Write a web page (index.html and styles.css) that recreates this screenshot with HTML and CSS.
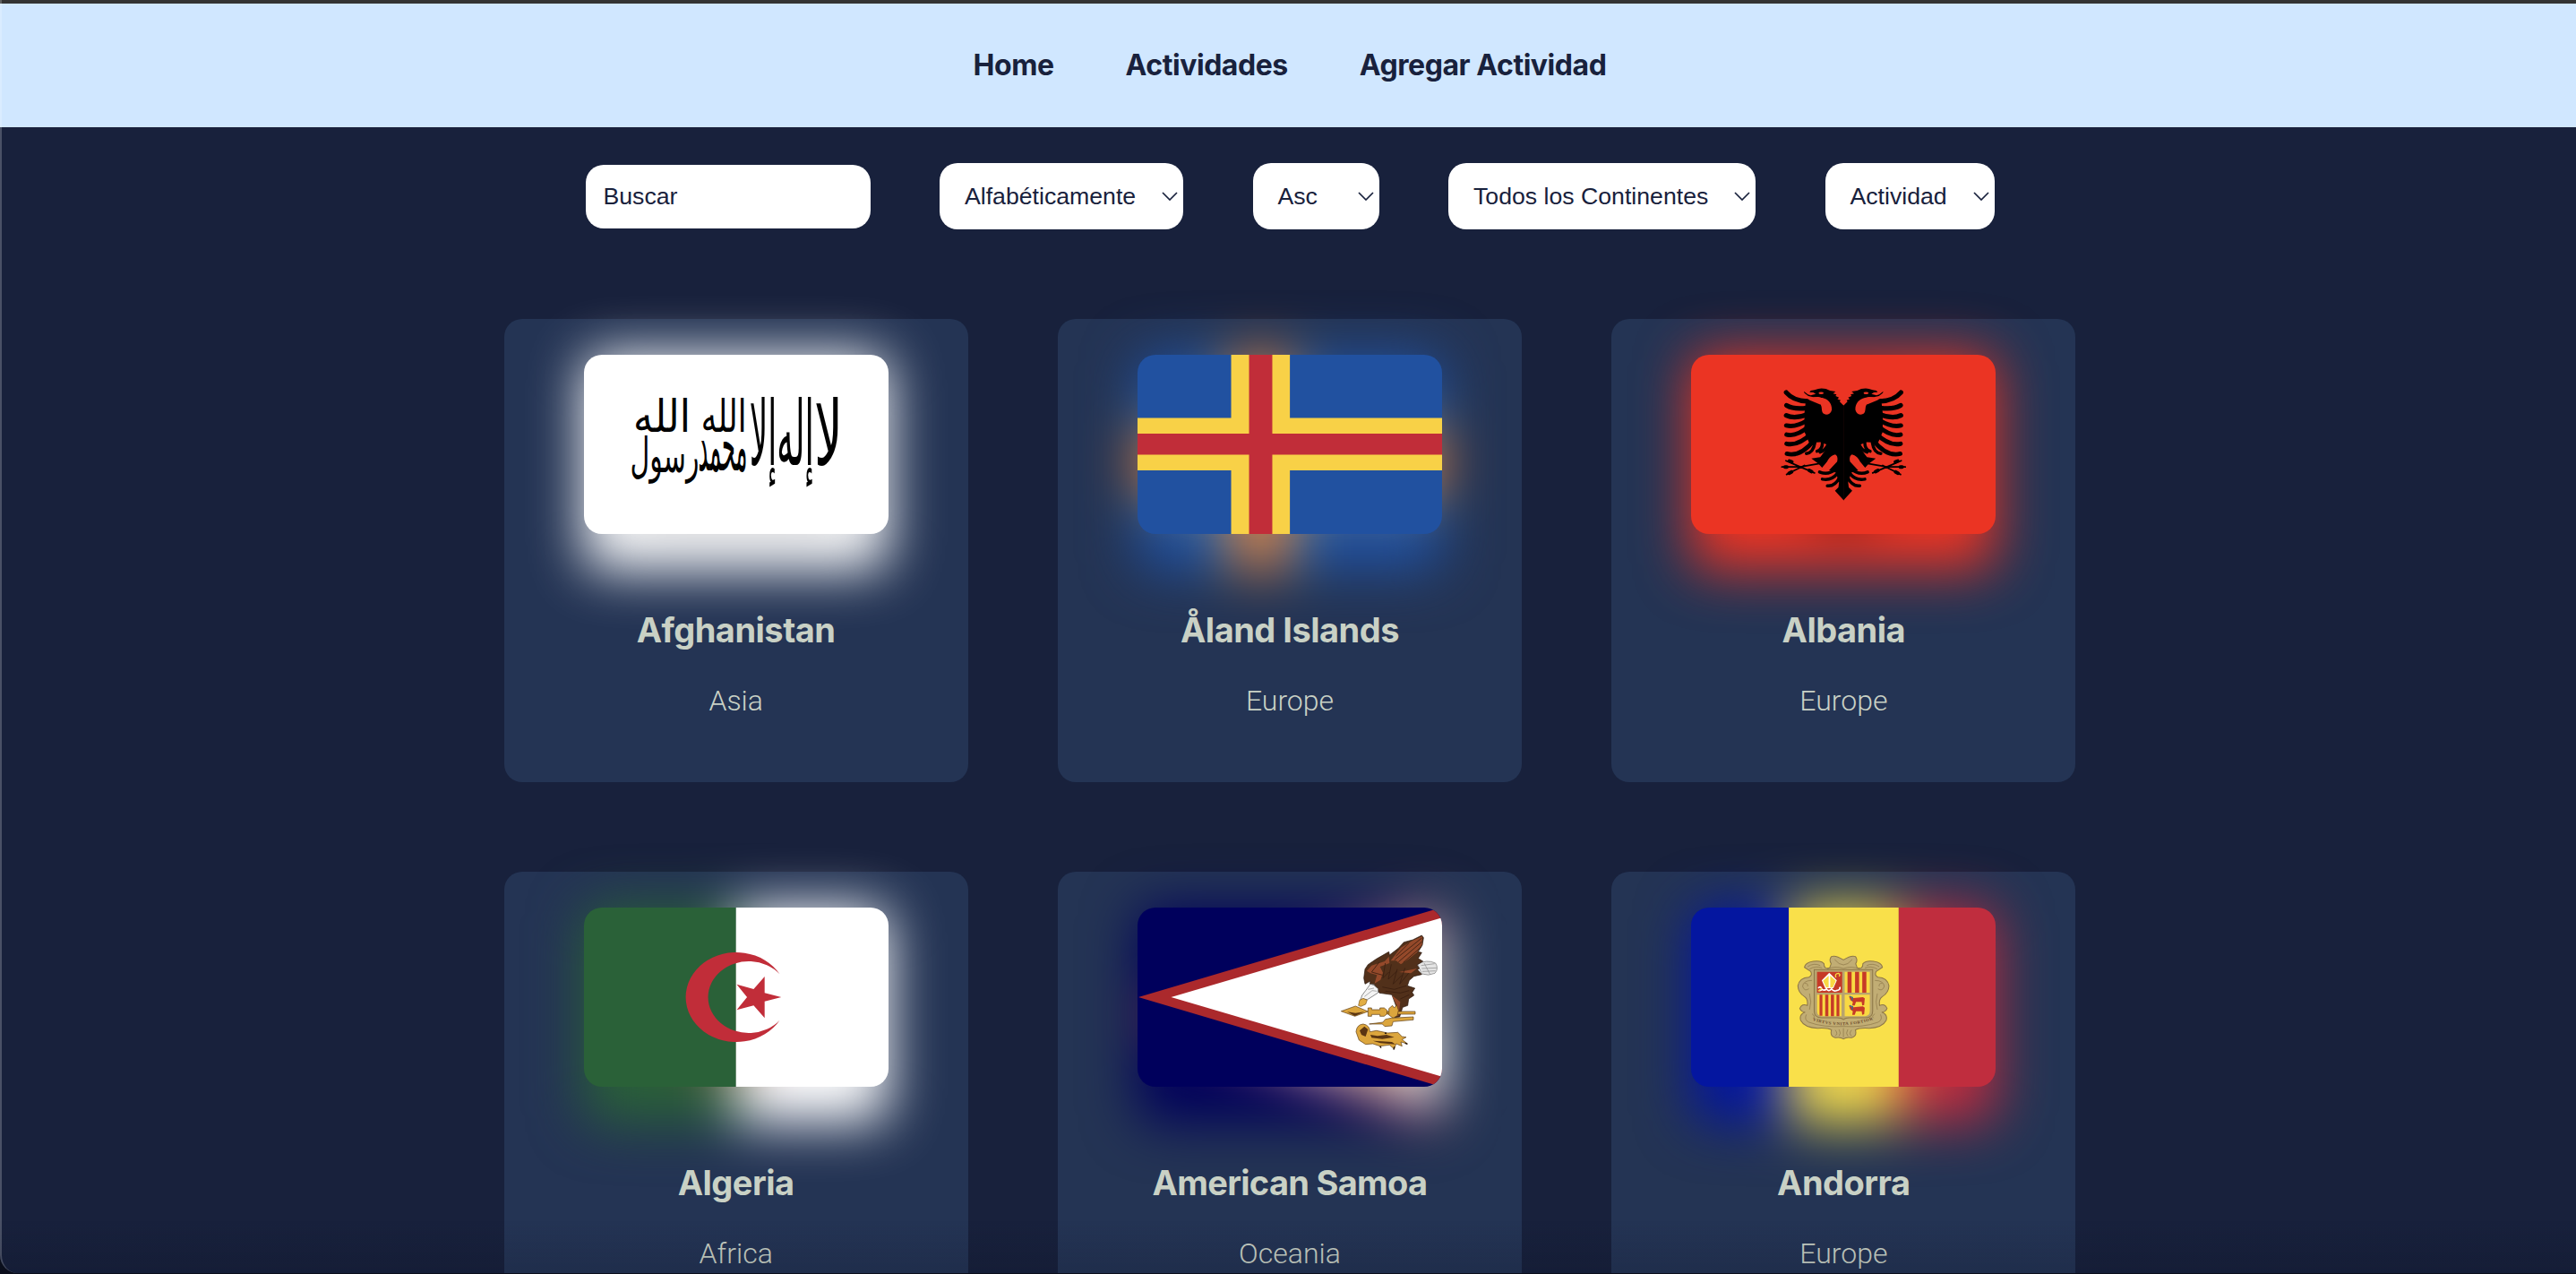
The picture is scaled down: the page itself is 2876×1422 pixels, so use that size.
FILE: index.html
```html
<!DOCTYPE html>
<html lang="es">
<head>
<meta charset="utf-8">
<title>Countries</title>
<link rel="stylesheet" href="styles.css">
</head>
<body>
<nav class="nav">
  <a class="nav-link" href="#">Home</a>
  <a class="nav-link" href="#">Actividades</a>
  <a class="nav-link" href="#">Agregar Actividad</a>
</nav>

<main class="page">
  <div class="filters">
    <input class="search" type="text" placeholder="Buscar">
    <button class="select select-order"><span>Alfabéticamente</span><svg class="chevron" viewBox="0 0 18 10"><path d="M1 1l8 8 8-8"/></svg></button>
    <button class="select select-dir"><span>Asc</span><svg class="chevron" viewBox="0 0 18 10"><path d="M1 1l8 8 8-8"/></svg></button>
    <button class="select select-continent"><span>Todos los Continentes</span><svg class="chevron" viewBox="0 0 18 10"><path d="M1 1l8 8 8-8"/></svg></button>
    <button class="select select-activity"><span>Actividad</span><svg class="chevron" viewBox="0 0 18 10"><path d="M1 1l8 8 8-8"/></svg></button>
  </div>

  <section class="grid">
    <article class="card">
      <div class="flag-box">
        <svg class="glow" viewBox="0 0 340 200" preserveAspectRatio="none"><path fill="#fff" d="M0 0h340v200H0z"/><path fill="#000" opacity=".22" d="M52 50h237v99H52z"/></svg>
        <svg class="flag" viewBox="0 0 340 200">
          <path fill="#fff" d="M0 0h340v200H0z"/>
          <g class="shahada" text-anchor="middle">
            <text transform="translate(273 123) scale(.56 1)">لا</text>
            <text transform="translate(236 123) scale(.37 1)">إله</text>
            <text transform="translate(200 123) scale(.36 1)">إلا</text>
            <text transform="translate(156 86) scale(.35 .5)">الله</text>
            <text transform="translate(155 129) scale(.24 .8)">محمد</text>
            <text transform="translate(90 131) scale(.3 .54)">رسول</text>
            <text transform="translate(87 86) scale(.44 .5)">الله</text>
          </g>
        </svg>
      </div>
      <h2 class="name">Afghanistan</h2>
      <p class="continent">Asia</p>
    </article>

    <article class="card">
      <div class="flag-box">
        <svg class="glow" viewBox="0 0 340 200" preserveAspectRatio="none"><use href="#aland"/></svg>
        <svg class="flag" viewBox="0 0 340 200">
          <g id="aland" transform="scale(.35075) translate(-285 -160)">
            <path fill="#2151a0" d="M285 160h970v571H285z"/>
            <path fill="#f8d147" d="M583 160h187v571H583zM285 361h970v167H285z"/>
            <path fill="#c12d39" d="M640 160h74v571h-74zM285 411h970v67H285z"/>
          </g>
        </svg>
      </div>
      <h2 class="name">Åland Islands</h2>
      <p class="continent">Europe</p>
    </article>

    <article class="card">
      <div class="flag-box">
        <svg class="glow" viewBox="0 0 340 200" preserveAspectRatio="none"><use href="#albania"/></svg>
        <svg class="flag" viewBox="0 0 340 200">
          <g id="albania" transform="scale(.35075) translate(-279 -160)">
            <path fill="#eb3423" d="M279 160h970v571H279z"/>
            <g id="eagle-half">
              <path d="M765 322L752 309 755 305 745 301 750 296 739 291 742 286 731 283 739 277 721 274Q705 265 684 268Q672 272 660 274L656 279 668 280 676 285 660 289 651 286 638 276 640 282 652 291 668 295 684 294 697 298 690 318 645 300 640 345V405L655 440 690 438 712 446 706 464 690 486 662 490 685 507 696 519 712 500Q722 480 738 477Q748 482 744 500L718 528 740 535 750 566 748 582 737 593 765 623z"/>
              <path fill="#eb3423" d="M650 297C668 304 684 308 692 320C697 330 693 340 700 347C709 354 724 349 727 335C728 315 715 301 697 297C680 294 668 297 650 297z"/>
              <ellipse cx="693" cy="282" rx="8" ry="3.5" fill="#eb3423"/>
              <g fill="none" stroke="#000" stroke-linecap="round">
                <path stroke-width="15" d="M582 280Q604 306 648 308M583 321Q606 335 648 329M582 353Q608 366 648 350"/>
                <path stroke-width="14" d="M582 385Q612 392 650 368M583 414Q614 422 654 388M583 443Q620 452 664 408M584 475Q628 486 672 430"/>
                <path stroke-width="10" d="M646 474Q668 472 673 440M680 467Q697 462 697 440M690 470Q706 464 714 448"/>
                <path stroke-width="10" d="M688 533Q716 545 742 522M697 556Q726 562 746 536M713 577Q737 580 752 550"/>
                <path stroke-width="5" d="M568 517H626L688 506M581 497L620 514 672 536M583 541L600 532 640 512"/>
                <path stroke-width="11" d="M578 517h6M592 498l8 3M591 537l8-4M655 528l8 4"/>
              </g>
            </g>
            <use href="#eagle-half" transform="translate(1529 0) scale(-1 1)"/>
          </g>
        </svg>
      </div>
      <h2 class="name">Albania</h2>
      <p class="continent">Europe</p>
    </article>

    <article class="card">
      <div class="flag-box">
        <svg class="glow" viewBox="0 0 340 200" preserveAspectRatio="none"><use href="#algeria"/></svg>
        <svg class="flag" viewBox="0 0 340 200">
          <g id="algeria" transform="scale(.35075 .33333) translate(-291 -158)">
            <path fill="#2a6138" d="M291 158h484v600H291z"/>
            <path fill="#fff" d="M775 158h486v600H775z"/>
            <path fill="#c12d39" d="M914 381A161 150 0 1 0 914 535A129 120 0 1 1 914 381zM919 458L866 444V389L831 431 777 415 810 458 777 501 831 486 866 528V472z"/>
          </g>
        </svg>
      </div>
      <h2 class="name">Algeria</h2>
      <p class="continent">Africa</p>
    </article>

    <article class="card">
      <div class="flag-box">
        <svg class="glow" viewBox="0 0 340 200" preserveAspectRatio="none"><use href="#samoa"/></svg>
        <svg class="flag" viewBox="0 0 340 200">
          <g id="samoa">
            <path fill="#00005c" d="M0 0h340v200H0z"/>
            <path fill="#ab292c" d="M1 100L340 -.3V200.3z"/>
            <path fill="#fff" d="M37.5 100L340 11.2V188.8z"/>
            <g transform="translate(220 22) scale(.33333)" stroke-linejoin="round">
              <path fill="#e4e4e4" stroke="#777" stroke-width="2" d="M278 124Q308 106 338 120Q350 138 336 154Q315 164 292 156z"/>
              <path fill="none" stroke="#888" stroke-width="2" d="M290 128l45-6M292 138l50-2M294 148l44-2M300 120l20 38"/>
              <path fill="#51301a" stroke="#24140a" stroke-width="2" d="M102 140L112 125 140 106 182 82 184 93 214 70 232 50 262 42 292 27 298 35 294 60 280 82 292 85 280 104 296 114 276 126 284 138 278 142 292 158 266 164 250 178 244 196 269 204 260 218 266 228 248 240 245 262 228 268 218 300 202 302 206 264 192 226 150 220 140 205 132 190 118 190 120 180 102 190 98 170z"/>
              <path fill="#94492a" d="M188 112L222 68 262 44 294 30 293 58 276 84 246 108 222 124 206 112zM108 146L124 128 168 114 182 98 184 120 152 132 162 152 154 176 134 188 142 160 120 154zM216 150l60-12-20 16zM192 228l28 22-6 46-10 2 4-36z"/>
              <path fill="none" stroke="#3a1e10" stroke-width="2.500" d="M200 110L292 36M214 116L293 48M230 118L290 66M206 96L250 52M150 116l-26 34 36 10M170 120l-8 50 20-20M190 124l-10 50 30-28M210 140l-14 50 30-30M236 136l-18 54 30-36M160 200l40 8 40-12M170 214l50 6 30-8M220 240l30-14"/>
              <path fill="#f4f4f4" stroke="#555" stroke-width="2" d="M120 190L132 194 146 206 146 219 126 232 110 242 94 240 86 246 92 228 104 212z"/>
              <path fill="none" stroke="#888" stroke-width="2" d="M100 232l26-20 16 2M112 208l20-4"/>
              <path fill="#e2ae44" stroke="#7a5318" stroke-width="2" d="M84 244L96 238 109 244 104 258 88 265 80 262z"/>
              <g fill="#dca63d" stroke="#5a3a12" stroke-width="2">
                <path d="M22 281L70 264 112 282 68 298z"/>
                <path d="M112 270h12v6h28v-6h14l10 8v12l-10 8h-14v-6h-28v6h-12zM176 282h94v9h-94z"/>
                <path d="M182 272l12-10 6 8 8-10 6 18-4 18-14 8-14-10z"/>
                <path d="M116 324L162 318 170 308 190 304 264 300 264 310 196 316 192 330 168 332 160 324z"/>
                <path d="M72 350Q74 326 96 324Q118 328 118 350L140 346 178 354 212 352 226 366 240 368 226 376 244 390 222 384 226 398 206 390 200 408 184 394 152 398 128 390 104 392 82 378z"/>
              </g>
              <path fill="#5a3512" d="M42 283l28 4 30-4-32 14zM84 346l16-14 12 10-8 24-14-6zM120 360l24 4 30-4 26 8-40 6-36-4zM128 380l30 2 34 2 12 8-50-4z"/>
              <path fill="none" stroke="#24140a" stroke-width="4" d="M152 398l4 6M200 400l-2 10M236 388l8 3M168 354l6 2"/>
            </g>
          </g>
        </svg>
      </div>
      <h2 class="name name-wide">American Samoa</h2>
      <p class="continent">Oceania</p>
    </article>

    <article class="card">
      <div class="flag-box">
        <svg class="glow" viewBox="0 0 340 200" preserveAspectRatio="none"><use href="#andorra"/></svg>
        <svg class="flag" viewBox="0 0 340 200">
          <g transform="scale(.35075 .33333) translate(-279 -158)">
            <g id="andorra-bands">
              <path fill="#0416a0" d="M279 158h312v600H279z"/>
              <path fill="#f9e04a" d="M590 158h350v600H590z"/>
              <path fill="#c02d3e" d="M940 158h310v600H940z"/>
            </g>
            <g stroke="#8d7748" stroke-width="3" fill="#c1ad74">
              <path d="M764 333Q738 316 726 322Q717 332 725 346L720 360Q702 366 702 346Q692 334 668 338Q642 342 640 358L660 372Q666 386 654 391Q624 392 619 420Q620 444 640 456Q652 464 649 486Q632 478 625 496Q630 508 642 508Q622 516 628 536Q640 560 682 562Q716 560 726 568Q720 588 738 594Q754 590 764 598Q774 590 790 594Q808 588 802 568Q812 560 846 562Q888 560 900 536Q906 516 886 508Q898 508 903 496Q896 478 879 486Q876 464 888 456Q908 444 909 420Q904 392 874 391Q862 386 868 372L888 358Q886 342 860 338Q836 334 826 346Q826 366 808 360L803 346Q811 332 802 322Q790 316 764 333z"/>
              <path fill="none" stroke-width="2" d="M736 332Q750 350 764 350Q778 350 792 332M650 356Q670 342 690 352M656 364Q676 352 696 360M878 356Q858 342 838 352M872 364Q852 352 832 360M664 402Q636 402 634 422Q640 440 654 430M640 412Q652 410 650 422M864 402Q892 402 894 422Q888 440 874 430M888 412Q876 410 878 422M656 446Q664 474 656 500M872 446Q864 474 872 500M646 516Q638 534 654 542Q700 560 764 556Q828 560 874 542Q890 534 882 516M664 514Q676 522 668 528M864 514Q852 522 860 528M738 568Q748 580 738 588M790 568Q780 580 790 588M764 562v30M750 566Q758 580 750 588M778 566Q770 580 778 588M712 364Q738 352 764 362Q790 352 816 364"/>
              <path fill="#b8a46e" d="M671 366H857V505Q857 526 834 527H784Q770 527 764 533Q758 527 744 527H694Q671 526 671 505z"/>
            </g>
            <path fill="#c63a27" d="M680 373h80v70h-80z"/>
            <path fill="#f9d943" d="M768 373h80v70h-80zM680 450h78v72h-64q-14-2-14-18zM768 450h80v54q0 16-14 18h-66z"/>
            <path fill="#c63a27" d="M777 373h13v70h-13zM801 373h13v70h-13zM824 373h13v70h-13zM688 450h9v70h-9zM706 450h10v72h-10zM724 450h10v72h-10zM742 450h9v72h-9z"/>
            <path fill="#fff" d="M719 376L743 402 732 428 706 428 695 402z"/>
            <path fill="#f9d943" d="M717 386v40h-8l-10-23zM722 386v40h8l10-23z"/>
            <path fill="none" stroke="#fff" stroke-width="5" d="M684 428q6-8 10 0t-8 8M696 432q8 6 14-2q6 12 16 0q6 10 16 6q14-2 10-12"/>
            <path fill="none" stroke="#f9d943" stroke-width="4" d="M740 392q-4-14 8-14q8 4 2 10M684 438l12-10"/>
            <g id="cow">
              <path fill="#c63a27" d="M782 456L796 461 826 458 832 462 830 484 824 486 822 474 804 474 800 486 792 486 794 474 786 468z"/>
              <path fill="none" stroke="#3f6a8a" stroke-width="4" d="M783 455l10 4-2 10"/>
            </g>
            <use href="#cow" y="31"/>
            <path id="motto-line" fill="none" d="M666 536Q764 570 868 530"/>
            <text class="motto"><textPath href="#motto-line" textLength="196">VIRTVS VNITA FORTIOR</textPath></text>
          </g>
        </svg>
        <svg class="defs"><defs><g id="andorra" transform="scale(.35075 .33333) translate(-279 -158)"><use href="#andorra-bands"/><ellipse cx="764" cy="460" rx="130" ry="125" fill="#c1a560"/></g></defs></svg>
      </div>
      <h2 class="name">Andorra</h2>
      <p class="continent">Europe</p>
    </article>
  </section>
</main>
</body>
</html>
```
FILE: styles.css
```css
* { box-sizing: border-box; }

body {
  margin: 0;
  height: 1422px;
  overflow: hidden;
  background: #18213c;
  color: #c9d1c5;
  font-family: Inter, sans-serif;
}

/* rounded window edge */
body::after {
  content: "";
  position: fixed;
  inset: 0 -40px 1px 0;
  border-left: 2px solid rgba(255, 255, 255, .22);
  border-bottom-left-radius: 20px;
  box-shadow: 0 0 0 20px #0c101d;
  pointer-events: none;
}

/* slight shade along the bottom of the window */
body::before {
  content: "";
  position: fixed;
  z-index: 2;
  inset: auto 0 0 0;
  height: 60px;
  background: linear-gradient(rgba(5, 8, 25, 0), rgba(5, 8, 25, .14));
  pointer-events: none;
}

.nav {
  display: flex;
  justify-content: center;
  align-items: center;
  gap: 80px;
  height: 142px;
  padding-left: 4px;
  border-top: 4px solid #4c4c4c;
  border-image: linear-gradient(#333 50%, #666 50%) 4 0 0 0;
  background: #d0e7ff;
}

.nav-link {
  color: #18213c;
  font-size: 32px;
  font-weight: 700;
  line-height: 42px;
  letter-spacing: -.45px;
  text-decoration: none;
}

.page { padding: 40px 0 0 4px; }

.filters {
  display: flex;
  justify-content: center;
  align-items: center;
  gap: 77.500px;
  height: 74px;
}

.search,
.select {
  border: 0;
  border-radius: 20px;
  background: #fff;
  color: #18213c;
  font: 26.670px "Liberation Sans", Arial, sans-serif;
}

.search {
  width: 318px;
  height: 71px;
  padding: 0 20px;
}

.search::placeholder { color: #18213c; opacity: 1; }

.select {
  display: flex;
  justify-content: space-between;
  align-items: center;
  height: 74px;
  padding: 0 6px 0 28px;
  white-space: nowrap;
}

.select-order { width: 272px; }
.select-dir { width: 141px; }
.select-continent { width: 343px; }
.select-activity { width: 189px; }

.chevron {
  flex: none;
  width: 18px;
  height: 10px;
  fill: none;
  stroke: #18213c;
  stroke-width: 1.700;
}

.grid {
  display: grid;
  grid-template-columns: repeat(3, 1fr);
  grid-auto-rows: 517px;
  gap: 100px;
  width: 1755px;
  margin: 100px auto 0;
}

.card {
  isolation: isolate;
  display: flex;
  flex-direction: column;
  align-items: center;
  padding-top: 40px;
  border-radius: 20px;
  background: #243454;
}

.flag-box {
  position: relative;
  width: 340px;
  height: 200px;
}

.flag {
  display: block;
  width: 340px;
  height: 200px;
  border-radius: 20px;
}

.glow {
  position: absolute;
  z-index: -1;
  top: 0;
  left: 0;
  width: 340px;
  height: 240px;
  border-radius: 20px;
  filter: blur(30px);
}

.defs { position: absolute; width: 0; height: 0; }

.shahada {
  font: 400 100px "DejaVu Sans", sans-serif;
  direction: rtl;
}

.motto {
  fill: #6b4a2a;
  font: 700 14px "Liberation Serif", serif;
}

.name {
  margin: 82.500px 0 0;
  font-size: 38px;
  font-weight: 700;
  line-height: 48px;
  letter-spacing: -.5px;
}

.name-wide { letter-spacing: -.7px; }

.continent {
  margin: 36.500px 0 0;
  font-family: Roboto, sans-serif;
  font-size: 32px;
  font-weight: 300;
  line-height: 38px;
}
```
